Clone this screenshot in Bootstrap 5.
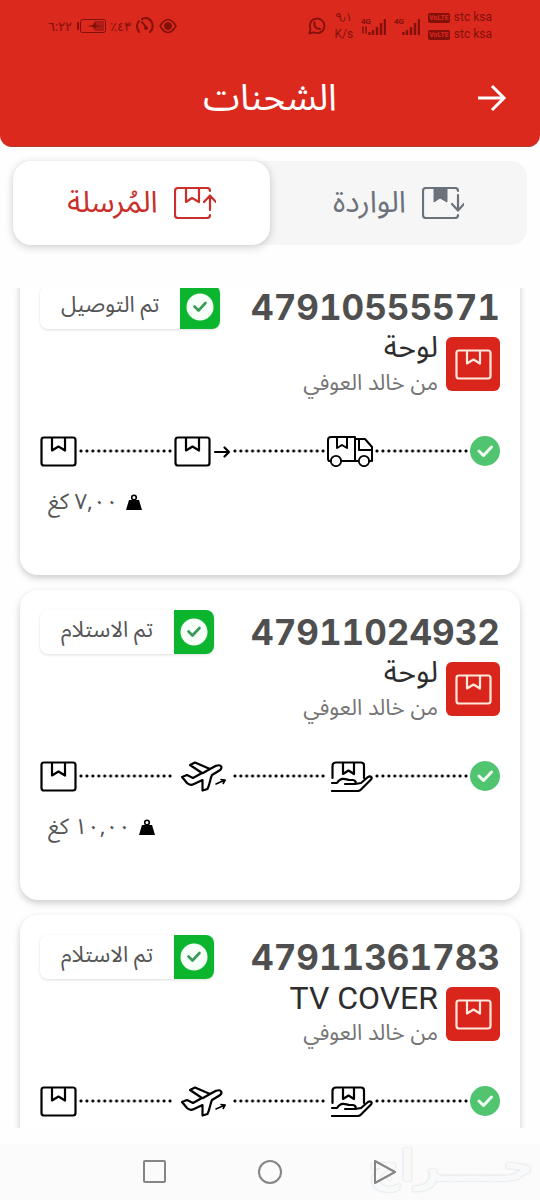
<!DOCTYPE html>
<html lang="ar" dir="rtl">
<head>
<meta charset="utf-8">
<meta name="viewport" content="width=device-width, initial-scale=1">
<title>الشحنات</title>
<link href="https://cdn.jsdelivr.net/npm/bootstrap@5.3.0/dist/css/bootstrap.min.css" rel="stylesheet">
<style>
  body { font-family: "Noto Sans Arabic", "Noto Sans", "DejaVu Sans", sans-serif; background: #fefefe; color: #333; }
  svg { display: block; flex: none; fill: none; stroke: currentColor; stroke-linecap: round; stroke-linejoin: round; }
  svg text { fill: currentColor; stroke: none; font: 700 8px Roboto, sans-serif; }
  .app-header { background: #db291e; border-radius: 0 0 12px 12px; border-bottom: 1px solid #b5392f; height: 147px; }
  .status { height: 52px; padding: 0 48px; color: #84100c; font: 12px/17px Roboto, "DejaVu Sans", sans-serif; }
  .clock { font-size: 13px; }
  .volte { background: #84100c; color: #db291e; font-size: 7px; line-height: 10px; font-weight: 700; padding: 0 1px; border-radius: 2px; }
  .title { font-size: 37px; line-height: 44px; }
  .back { width: 36px; height: 40px; }
  .app-bar { padding: 24px 30px 0; }
  .app-tabs { margin: 14px 13px 0; background: #f6f6f6; border-radius: 16px; }
  .app-tab { height: 84px; border: 0; background: none; color: #6b727a; font-size: 30px; line-height: 40px; border-radius: 18px; }
  .app-tab.active { background: #fff; color: #c9302c; box-shadow: 0 2px 8px #0003; }
  .shipments { margin-top: 43px; margin-bottom: 16px; padding: 0 20px 15px; gap: 15px; scrollbar-width: none; min-height: 0; }
  .shipments::-webkit-scrollbar { display: none; }
  .shipment { flex: none; min-height: 310px; border: 0; border-radius: 18px; padding: 20px; background: #fff; box-shadow: 0 3px 7px #0003; }
  .state { height: 44px; border-radius: 8px; color: #555; font-size: 22px; line-height: 40px; box-shadow: 0 1px 3px #0002; }
  .state-icon { width: 40px; height: 44px; background: #0cb52e; color: #3a9a5a; border-radius: 0 8px 8px 0; }
  .state-text { padding: 0 21px; }
  .number { font: 700 35px/44px Inter, sans-serif; font-variant-numeric: tabular-nums; color: #4f4f4f; }
  .parcel { width: 54px; height: 54px; background: #da251c; color: #ffe9dc; border-radius: 6px; }
  .info { height: 70px; }
  .name { font-size: 30px; line-height: 38px; color: #2d2d2d; }
  .name-latin { font-family: Roboto, sans-serif; font-size: 32px; }
  .sender { font-size: 22px; line-height: 32px; color: #757575; }
  .track { height: 36px; margin-top: 34px; color: #000; }
  .dots { height: 4px; background: radial-gradient(circle, #000 1px, #0000 2px) 0 0 / 6px 4px round; margin: 0 1px; }
  .weight { margin-top: 16px; padding: 0 8px; font-size: 22px; line-height: 34px; color: #555; }
  .sys-nav { height: 56px; background: #fbfbfb; gap: 91px; }
  .sys-nav button { width: 24px; height: 24px; color: #858585; }
  .brand { right: 6px; bottom: 8px; font: 700 44px/52px "DejaVu Sans", sans-serif; color: #f8f9fa; text-shadow: 0 0 2px #ccc; }
</style>
</head>
<body class="vh-100 d-flex flex-column overflow-hidden">
<svg class="d-none">
  <symbol id="box" viewBox="0 0 37 31"><path stroke-width="2.200" d="M4 1.500h29q2.500 0 2.500 2.500v23q0 2.500-2.500 2.500H4q-2.500 0-2.500-2.500V4Q1.500 1.500 4 1.500zM12 2v12.500l6.500-4 6.500 4V2"/></symbol>
  <symbol id="box-out" viewBox="0 0 57 31"><path stroke-width="2.200" d="M4 1.500h29q2.500 0 2.500 2.500v23q0 2.500-2.500 2.500H4q-2.500 0-2.500-2.500V4Q1.500 1.500 4 1.500zM12 2v12.500l6.500-4 6.500 4V2M41 16h14m-4.500-4.500L55 16l-4.500 4.500"/></symbol>
  <symbol id="truck" viewBox="0 0 46 31"><path stroke-width="2" d="M4 25H2q-1-1-1-2V4q0-3 3-3h24v24H14M10 1v11l5-3 5 3V1M28 3h10l7 8v14h-3M28 25h3M32 3v11h13M28 3v22"/><circle cx="9" cy="25" r="5.200" stroke-width="1.800"/><circle cx="37" cy="25" r="5.200" stroke-width="1.800"/></symbol>
  <symbol id="plane" viewBox="-6 0 57 31"><path stroke-width="2.200" d="M2 16l5-2 6 3 9-5L10 4l5-2.500L30 8l6-3.200c6-2 7 2.500 3 5L32 14c-2 4-2 9-4.500 14l-5 1.500V19L14 23q-4 2-7-1L2 16zM30 8l-7 4"/><path stroke-width="1.600" d="M36 23l9-4m-4-.500l4.200.500-2 3.500"/></symbol>
  <symbol id="hand" viewBox="-4 0 46 31"><path stroke-width="2.200" d="M1.500 17V5q0-3.500 3.500-3.500h25q3 0 3 3V17M12 2v11l5.500-3.500L23 13V2M1 22h5c4-6 8-4 12-3h4q4 1 2 4H14M24 23l6-1 7-6c3-1.500 4.500.500 3 2.500l-10 10q-1.500 1.500-4 1.500H1"/></symbol>
  <symbol id="done" viewBox="0 0 30 30"><circle cx="15" cy="15" r="15" fill="#51c46f" stroke="none"/><path stroke="#f2fff2" stroke-width="3" d="M9 15l4.500 4.500 8-8.500"/></symbol>
  <symbol id="tick" viewBox="0 0 28 28"><circle cx="14" cy="14" r="13.500" fill="#f6fff8" stroke="none"/><path stroke-width="2.600" d="M8.500 13.500l4 4 7-7.500"/></symbol>
  <symbol id="kg" viewBox="0 0 16 16"><path fill="#000" stroke="none" d="M3 6h10l3 10H0z"/><circle cx="8" cy="3.500" r="2.300" stroke="#000" stroke-width="1.600"/></symbol>
  <symbol id="bars" viewBox="0 0 18 16"><path stroke-width="2.400" stroke-linecap="butt" d="M1.500 16v-3M5 16v-5M9 16V8M13 16V4M17 16V0"/></symbol>
</svg>

<header class="app-header flex-shrink-0 text-white">
  <div class="status d-flex align-items-center justify-content-between" dir="ltr">
    <div class="clock d-flex align-items-center gap-1">
      <span>٦:٢٢</span>
      <svg width="30" height="16" viewBox="0 0 30 16"><path d="M2 5v6" stroke-width="2"/><rect x="4.500" y="1.500" width="25" height="13" rx="2"/><path fill="currentColor" stroke="none" opacity=".5" d="M19 3h9v10h-9z"/><path fill="currentColor" stroke="none" d="M11 8l6-1 2-4 1 4 5 1-5 1-2 3-1-3z"/></svg>
      <span>٪٤٣</span>
      <svg width="20" height="18" viewBox="0 0 20 18"><path stroke-width="2" d="M4 15Q0 9 4 4M7 2q7-3 10 4 2 5-2 9M7 5l4 5"/><circle cx="11" cy="11" r="1.500" fill="currentColor"/></svg>
      <svg width="18" height="16" viewBox="0 0 18 16"><path stroke-width="1.600" d="M1 8q8-13 16 0-8 13-16 0z"/><circle cx="9" cy="8" r="3.500" fill="currentColor"/></svg>
    </div>
    <div class="d-flex align-items-center gap-2">
      <svg width="18" height="18" viewBox="0 0 18 18"><path stroke-width="1.800" d="M1.500 16.500l1-4.500a7.300 7.300 0 1 1 3.200 3.300z"/><path stroke-width="2" d="M6.500 5.500q-1 6 5.500 6.500"/></svg>
      <span class="text-center">٩٫١<br>K/s</span>
      <svg width="25" height="18" viewBox="0 0 25 18"><text x="0" y="7">4G</text><path d="M2 10v6m3-6v6" stroke-width="1.500"/><use href="#bars" x="7" y="2" width="18" height="16"/></svg>
      <svg width="26" height="18" viewBox="0 0 26 18"><text x="0" y="7">4G</text><use href="#bars" x="8" y="2" width="18" height="16"/></svg>
      <div>
        <div class="d-flex align-items-center gap-1"><span class="volte">VoLTE</span>stc ksa</div>
        <div class="d-flex align-items-center gap-1"><span class="volte">VoLTE</span>stc ksa</div>
      </div>
    </div>
  </div>
  <div class="app-bar d-flex align-items-center justify-content-between">
    <button type="button" class="back btn p-0 text-white border-0 d-flex align-items-center justify-content-center" aria-label="رجوع"><svg width="30" height="28" viewBox="0 0 30 28"><path stroke-width="3" stroke-linecap="butt" stroke-linejoin="miter" d="M1 14h26M15 2l12 12-12 12"/></svg></button>
    <h1 class="title m-0 fw-normal">الشحنات</h1>
    <span class="back"></span>
  </div>
</header>

<nav class="app-tabs d-flex flex-shrink-0">
  <button type="button" class="app-tab w-50 d-flex align-items-center justify-content-center gap-3">
    <svg width="42" height="32" viewBox="0 0 42 32"><path stroke-width="2.200" d="M36 4q0-3-3-3H4Q1 1 1 4v24q0 3 3 3h29q3 0 3-3M36 8v15m-6-6l6 6.500 6-6.500"/><path fill="currentColor" d="M12 2v13l6-4 7 4V2z"/></svg>
    <span>الواردة</span>
  </button>
  <button type="button" class="app-tab active w-50 d-flex align-items-center justify-content-center gap-3">
    <svg width="42" height="32" viewBox="0 0 42 32"><path stroke-width="2.200" d="M36 4q0-3-3-3H4Q1 1 1 4v24q0 3 3 3h29q3 0 3-3M36 23V9m-6 6l6-6.500 6 6.500M12 2v13l6-4 7 4V2"/></svg>
    <span>المُرسلة</span>
  </button>
</nav>

<main class="shipments flex-grow-1 overflow-auto d-flex flex-column" id="shipments">
  <article class="shipment">
    <div class="d-flex justify-content-between">
      <div class="number">47910555571</div>
      <div class="state d-flex"><span class="state-icon d-flex align-items-center justify-content-center"><svg width="28" height="28"><use href="#tick"/></svg></span><span class="state-text">تم التوصيل</span></div>
    </div>
    <div class="info d-flex gap-2">
      <span class="parcel mt-2 d-flex align-items-center justify-content-center"><svg width="37" height="31"><use href="#box"/></svg></span>
      <div><div class="name">لوحة</div><div class="sender">من خالد العوفي</div></div>
    </div>
    <div class="track d-flex align-items-center">
      <svg width="30" height="30"><use href="#done"/></svg><span class="dots flex-fill"></span>
      <svg width="46" height="31"><use href="#truck"/></svg><span class="dots flex-fill"></span>
      <svg width="57" height="31"><use href="#box-out"/></svg><span class="dots flex-fill"></span>
      <svg width="37" height="31"><use href="#box"/></svg>
    </div>
    <div class="weight d-flex align-items-center justify-content-end gap-2"><svg width="16" height="16"><use href="#kg"/></svg><span>٧,٠٠ كغ</span></div>
  </article>

  <article class="shipment">
    <div class="d-flex justify-content-between">
      <div class="number">47911024932</div>
      <div class="state d-flex"><span class="state-icon d-flex align-items-center justify-content-center"><svg width="28" height="28"><use href="#tick"/></svg></span><span class="state-text">تم الاستلام</span></div>
    </div>
    <div class="info d-flex gap-2">
      <span class="parcel mt-2 d-flex align-items-center justify-content-center"><svg width="37" height="31"><use href="#box"/></svg></span>
      <div><div class="name">لوحة</div><div class="sender">من خالد العوفي</div></div>
    </div>
    <div class="track d-flex align-items-center">
      <svg width="30" height="30"><use href="#done"/></svg><span class="dots flex-fill"></span>
      <svg width="46" height="31"><use href="#hand"/></svg><span class="dots flex-fill"></span>
      <svg width="57" height="31"><use href="#plane"/></svg><span class="dots flex-fill"></span>
      <svg width="37" height="31"><use href="#box"/></svg>
    </div>
    <div class="weight d-flex align-items-center justify-content-end gap-2"><svg width="16" height="16"><use href="#kg"/></svg><span>١٠,٠٠ كغ</span></div>
  </article>

  <article class="shipment">
    <div class="d-flex justify-content-between">
      <div class="number">47911361783</div>
      <div class="state d-flex"><span class="state-icon d-flex align-items-center justify-content-center"><svg width="28" height="28"><use href="#tick"/></svg></span><span class="state-text">تم الاستلام</span></div>
    </div>
    <div class="info d-flex gap-2">
      <span class="parcel mt-2 d-flex align-items-center justify-content-center"><svg width="37" height="31"><use href="#box"/></svg></span>
      <div><div class="name name-latin">TV COVER</div><div class="sender">من خالد العوفي</div></div>
    </div>
    <div class="track d-flex align-items-center">
      <svg width="30" height="30"><use href="#done"/></svg><span class="dots flex-fill"></span>
      <svg width="46" height="31"><use href="#hand"/></svg><span class="dots flex-fill"></span>
      <svg width="57" height="31"><use href="#plane"/></svg><span class="dots flex-fill"></span>
      <svg width="37" height="31"><use href="#box"/></svg>
    </div>
  </article>
</main>

<footer class="sys-nav position-relative flex-shrink-0 d-flex align-items-center justify-content-center" dir="ltr">
  <span class="brand position-absolute">حــــراج</span>
  <button type="button" class="btn p-0 border-0 position-relative" aria-label="التطبيقات"><svg width="24" height="24" viewBox="0 0 24 24"><rect x="1" y="1" width="21" height="21" rx="1" stroke-width="2"/></svg></button>
  <button type="button" class="btn p-0 border-0 position-relative" aria-label="الرئيسية"><svg width="24" height="24" viewBox="0 0 24 24"><circle cx="12" cy="12" r="11" stroke-width="2"/></svg></button>
  <button type="button" class="btn p-0 border-0 position-relative" aria-label="السابق"><svg width="24" height="24" viewBox="0 0 24 24"><path stroke-width="2" d="M2 1l20 11L2 23z"/></svg></button>
</footer>
<script src="https://cdn.jsdelivr.net/npm/bootstrap@5.3.0/dist/js/bootstrap.bundle.min.js"></script>
<script>document.getElementById('shipments').scrollTop = 23;</script>
</body>
</html>
